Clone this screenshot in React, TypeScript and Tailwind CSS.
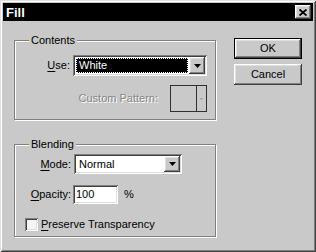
import React from 'react';

const font = { fontFamily: '"Liberation Sans", Arial, sans-serif' };

// classic sunken field bevel
const sunken =
  'shadow-[inset_1px_1px_0_#808080,inset_-1px_-1px_0_#ffffff,inset_2px_2px_0_#404040,inset_-2px_-2px_0_#dfdfdf]';
const raised =
  'shadow-[inset_-1px_-1px_0_#404040,inset_1px_1px_0_#ffffff,inset_-2px_-2px_0_#808080,inset_2px_2px_0_#dfdfdf]';
const etched = 'border border-[#808080] shadow-[inset_1px_1px_0_#ffffff,1px_1px_0_#ffffff]';

function ArrowButton({ disabled = false }: { disabled?: boolean }) {
  return (
    <div className={`w-[16px] self-stretch bg-[#c9c9c9] ${raised} flex items-center justify-center`}>
      <svg width="7" height="4" viewBox="0 0 7 4">
        <path d="M0 0h7L3.5 4z" fill={disabled ? '#808080' : '#000'} />
      </svg>
    </div>
  );
}

function U({ children }: { children: React.ReactNode }) {
  return <span className="underline underline-offset-2">{children}</span>;
}

function GroupBox({ title, className, children }: { title: string; className: string; children: React.ReactNode }) {
  return (
    <div className={`relative ${etched} ${className}`}>
      <span className="absolute left-[14px] -top-[8px] bg-[#c9c9c9] px-[2px] leading-[14px]">{title}</span>
      {children}
    </div>
  );
}

export default function App() {
  return (
    <div
      className="w-[316px] h-[252px] bg-[#c9c9c9] p-[3px] flex flex-col text-[11px] text-black shadow-[inset_1px_1px_0_#dfdfdf,inset_-1px_-1px_0_#404040,inset_2px_2px_0_#ffffff,inset_-2px_-2px_0_#808080]"
      style={font}
    >
      {/* title bar */}
      <div className="h-[18px] bg-black flex items-center justify-between pl-[3px] pr-[2px]">
        <span className="text-white font-bold text-[13px] leading-none">Fill</span>
        <div className={`w-[16px] h-[14px] bg-[#c9c9c9] ${raised} flex items-center justify-center`}>
          <svg width="8" height="7" viewBox="0 0 8 7">
            <path d="M0.5 0.5L7.5 6.5M7.5 0.5L0.5 6.5" stroke="#000" strokeWidth="1.8" />
          </svg>
        </div>
      </div>

      <div className="flex pl-[11px]">
        {/* left column */}
        <div className="w-[202px] flex flex-col">
          <GroupBox title="Contents" className="mt-[19px] h-[80px] pt-[14px] pr-[8px] flex flex-col">
            <div className="flex items-center justify-end">
              <span>
                <U>U</U>se:
              </span>
              <div className={`ml-[3px] w-[134px] h-[21px] bg-white ${sunken} p-[2px] flex`}>
                <div className="flex-1 m-[1px] bg-black border border-dotted border-white flex items-center pl-[2px]">
                  <span className="text-white">White</span>
                </div>
                <ArrowButton />
              </div>
            </div>
            <div className="flex items-center justify-end mt-[9px]">
              <span className="text-[#878787] [text-shadow:1px_1px_0_#ffffff]">Custom Pattern:</span>
              <div className="ml-[12px] w-[37px] h-[27px] border border-[#303030] flex">
                <div className="flex-1 border-r border-[#303030]" />
                <div className="w-[9px] flex items-center justify-center">
                  <svg width="3" height="2" viewBox="0 0 3 2">
                    <path d="M0 0h3L1.5 2z" fill="#999" />
                  </svg>
                </div>
              </div>
            </div>
          </GroupBox>

          <GroupBox title="Blending" className="mt-[24px] h-[93px] pt-[9px] grid grid-cols-[56px_1fr] gap-x-[3px] content-start">
            <span className="text-right self-center">
              <U>M</U>ode:
            </span>
            <div className={`w-[108px] h-[20px] bg-white ${sunken} p-[2px] flex`}>
              <div className="flex-1 flex items-center pl-[3px]">Normal</div>
              <ArrowButton />
            </div>

            <span className="text-right self-center mt-[11px]">
              <U>O</U>pacity:
            </span>
            <div className="flex items-center mt-[11px]">
              <div className={`-ml-[1px] w-[45px] h-[19px] bg-white ${sunken} flex items-center pl-[3px]`}>100</div>
              <span className="ml-[6px]">%</span>
            </div>

            <div className="col-span-2 flex items-center mt-[12px] pl-[10px]">
              <div className={`w-[13px] h-[13px] bg-[#f4f4f4] ${sunken}`} />
              <span className="ml-[3px]">
                <U>P</U>reserve Transparency
              </span>
            </div>
          </GroupBox>
        </div>

        {/* buttons */}
        <div className="ml-[18px] mt-[17px] flex flex-col w-[68px]">
          <button className="h-[21px] border border-black bg-[#c9c9c9] p-0">
            <div className={`h-full w-full ${raised} flex items-center justify-center`}>OK</div>
          </button>
          <button className={`mt-[5px] h-[21px] bg-[#c9c9c9] ${raised} flex items-center justify-center`}>Cancel</button>
        </div>
      </div>
    </div>
  );
}
